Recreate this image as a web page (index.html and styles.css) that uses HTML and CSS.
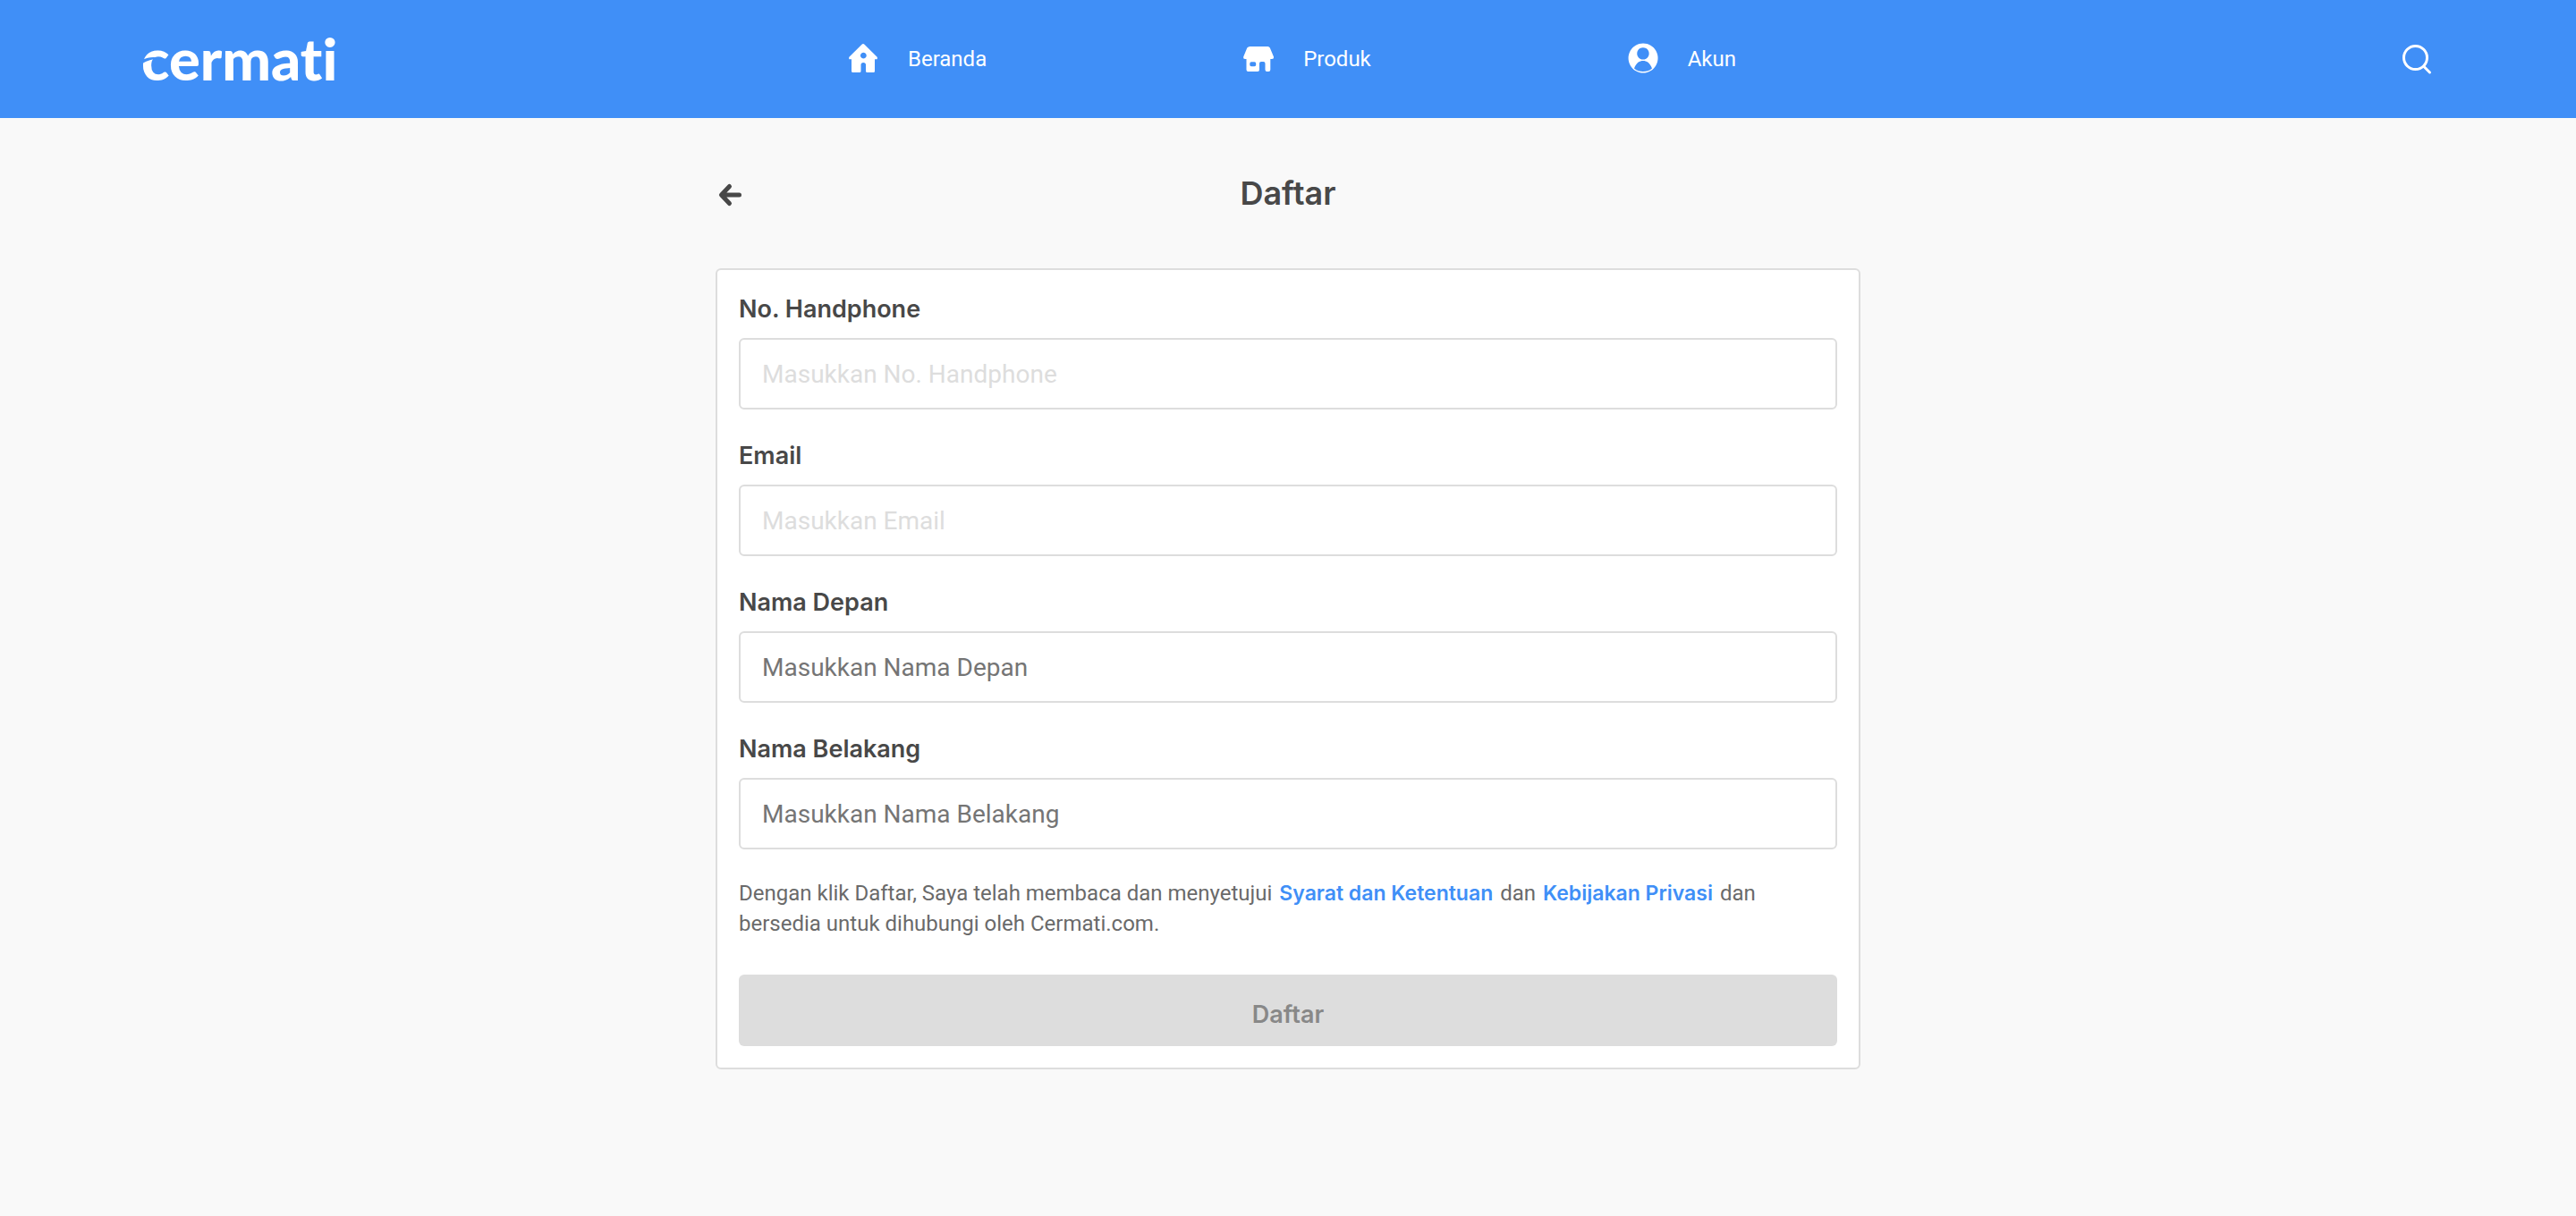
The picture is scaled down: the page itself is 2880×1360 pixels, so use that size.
FILE: index.html
```html
<!DOCTYPE html>
<html lang="id">
<head>
<meta charset="utf-8">
<meta name="viewport" content="width=device-width, initial-scale=1">
<title>Daftar</title>
<link rel="stylesheet" href="styles.css">
</head>
<body>
<header class="site-header">
  <div class="header-inner">
    <a class="logo" href="#">
      <svg class="logo-mark" viewBox="0 0 220 60" role="img" aria-label="cermati">
        <text class="logo-text" x="-2" y="54">cermati</text>
        <path class="logo-cut" d="M-1 31C7 27 16 27 23 31C15 29 8 30 -1 35Z"/>
      </svg>
    </a>
    <nav class="main-nav">
      <a class="nav-item" href="#">
        <svg class="icon" viewBox="0 0 36 36"><path fill-rule="evenodd" d="M16.500 1.800Q18 .4 19.500 1.800L33.600 15.800Q34.400 17 33.500 18.200H31V31.500Q31 33 29.500 33H22.500Q21 33 21 31.500V24.500Q21 22 18.200 22Q15.500 22 15.500 24.500V31.500Q15.500 33 14 33H6.500Q5 33 5 31.500V18.200H2.500Q1.600 17 2.400 15.800ZM18.300 10.700a3.400 3.400 0 1 0 .1 0Z"/></svg>
        <span>Beranda</span>
      </a>
      <a class="nav-item" href="#">
        <svg class="icon" viewBox="0 0 36 36"><path fill-rule="evenodd" d="M8.500 4H28.500Q30 4 30.800 5.500L35 15.500Q35.300 18 33 18H31.300V30Q31.300 32 29.300 32H27.500Q25.500 32 25.500 30V23Q25.500 21 23.500 21H21Q19 21 19 23V30Q19 32 17 32H6.500Q4.500 32 4.500 30V18H3Q.8 18 1.200 15.500L5.300 5.500Q6.500 4 8.500 4ZM10 21.300Q8.300 21.300 8.300 23V24.500Q8.300 26.200 10 26.200H13.500Q15.200 26.200 15.200 24.500V23Q15.200 21.300 13.500 21.300Z"/></svg>
        <span>Produk</span>
      </a>
      <a class="nav-item" href="#">
        <svg class="icon" viewBox="0 0 36 36"><path fill-rule="evenodd" d="M18 .5a16.500 16.500 0 1 0 .1 0ZM18 5.200a6.700 6.700 0 1 1-.1 0ZM8 28.500C10.500 22 14 20 18 20S25.500 22 28 28.500C25 31.200 22 32 18 32S11 31.200 8 28.500Z"/></svg>
        <span>Akun</span>
      </a>
    </nav>
    <button class="icon-button search" type="button" aria-label="Cari">
      <svg class="icon icon-line" viewBox="0 0 36 36"><circle cx="16.500" cy="16.500" r="13"/><path d="M26 26.500L32.500 33"/></svg>
    </button>
  </div>
</header>

<main class="page">
  <div class="title-row">
    <button class="icon-button back" type="button" aria-label="Kembali">
      <svg class="icon-back" viewBox="0 0 32 32"><path d="M15.500 8.500L6.500 18L15.500 27.500M7.500 18H26.500"/></svg>
    </button>
    <h1 class="title">Daftar</h1>
  </div>

  <form class="card">
    <div class="field">
      <label class="label" for="phone">No. Handphone</label>
      <input class="input input-light" id="phone" type="tel" placeholder="Masukkan No. Handphone">
    </div>
    <div class="field">
      <label class="label" for="email">Email</label>
      <input class="input input-light" id="email" type="email" placeholder="Masukkan Email">
    </div>
    <div class="field">
      <label class="label" for="first-name">Nama Depan</label>
      <input class="input" id="first-name" type="text" placeholder="Masukkan Nama Depan">
    </div>
    <div class="field">
      <label class="label" for="last-name">Nama Belakang</label>
      <input class="input" id="last-name" type="text" placeholder="Masukkan Nama Belakang">
    </div>
    <p class="terms">Dengan klik Daftar, Saya telah membaca dan menyetujui <a class="terms-link" href="#">Syarat dan Ketentuan</a> dan <a class="terms-link" href="#">Kebijakan Privasi</a> dan bersedia untuk dihubungi oleh Cermati.com.</p>
    <button class="submit" type="submit" disabled>Daftar</button>
  </form>
</main>
</body>
</html>
```
FILE: styles.css
```css
* {
  box-sizing: border-box;
}

body {
  margin: 0;
  background: #f9f9f9;
  color: #484848;
  font-family: Roboto, sans-serif;
  font-size: 24px;
}

.site-header {
  background: #408ff7;
  color: #fff;
}

.header-inner {
  display: grid;
  grid-template-columns: 1fr minmax(0, 1280px) 1fr;
  align-items: center;
  max-width: 2560px;
  min-height: 132px;
  margin: 0 auto;
}

.logo {
  justify-self: start;
  color: inherit;
}

.logo-mark {
  display: block;
  width: 220px;
  height: 60px;
  overflow: visible;
}

.logo-text {
  fill: currentColor;
  font-family: Lato, sans-serif;
  font-size: 65px;
  font-weight: 900;
  font-variant-ligatures: none;
}

.logo-cut {
  fill: #408ff7;
}

.main-nav {
  display: flex;
  justify-content: space-around;
  margin: 0 -4px 0 4px;
}

.nav-item {
  display: flex;
  align-items: center;
  gap: 32px;
  color: inherit;
  line-height: 36px;
  text-decoration: none;
}

.icon {
  display: block;
  width: 36px;
  height: 36px;
  fill: currentColor;
}

.icon-line {
  fill: none;
  stroke: currentColor;
  stroke-width: 3;
  stroke-linecap: round;
}

.icon-button {
  padding: 0;
  border: 0;
  background: none;
  color: inherit;
  cursor: pointer;
}

.search {
  justify-self: end;
}

.page {
  max-width: 1280px;
  margin: 0 auto;
  padding: 60px 0;
}

.title-row {
  display: grid;
  grid-template-columns: 32px 1fr 32px;
  align-items: center;
  margin-bottom: 60px;
}

.icon-back {
  display: block;
  width: 32px;
  height: 32px;
  fill: none;
  stroke: currentColor;
  stroke-width: 5;
  stroke-linecap: round;
  stroke-linejoin: round;
}

.title {
  margin: 0;
  font-family: Inter, sans-serif;
  font-size: 36px;
  font-weight: 600;
  line-height: 48px;
  text-align: center;
}

.card {
  padding: 24px;
  border: 2px solid #ddd;
  border-radius: 6px;
  background: #fff;
}

.field {
  margin-bottom: 32px;
}

.label {
  display: block;
  margin-bottom: 12px;
  font-family: Inter, sans-serif;
  font-size: 27px;
  font-weight: 600;
  line-height: 40px;
}

.input {
  display: block;
  width: 100%;
  height: 80px;
  padding: 0 24px;
  border: 2px solid #ddd;
  border-radius: 6px;
  background: #fff;
  color: #484848;
  font-family: inherit;
  font-size: 28px;
}

.input::placeholder {
  color: #757575;
  opacity: 1;
}

.input-light::placeholder {
  color: #ddd;
}

.terms {
  margin: 0 0 40px;
  color: #6a6a6a;
  line-height: 34px;
}

.terms-link {
  margin: 0 2px;
  color: #408ff7;
  font-family: Inter, sans-serif;
  font-size: 23px;
  font-weight: 600;
  line-height: 24px;
  text-decoration: none;
}

.submit {
  display: block;
  width: 100%;
  height: 80px;
  padding: 8px 0 0;
  border: 0;
  border-radius: 6px;
  background: #ddd;
  color: #888;
  font-family: Inter, sans-serif;
  font-size: 27px;
  font-weight: 600;
}
```
